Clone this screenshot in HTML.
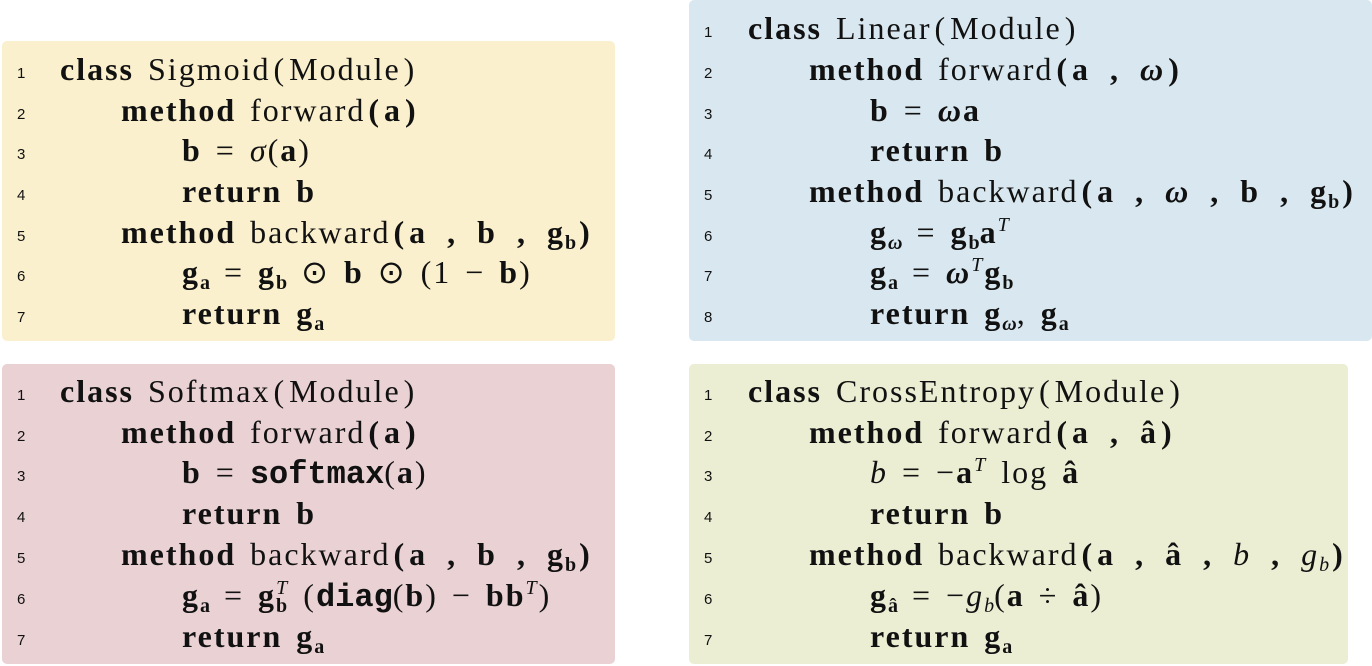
<!DOCTYPE html><html><head><style>
body{margin:0;width:1372px;height:666px;background:#fff;position:relative;overflow:hidden;font-family:"Liberation Serif",serif;font-size:32px;color:#111}
.b{position:absolute;border-radius:5px}
.l{position:absolute;white-space:nowrap;line-height:34px;letter-spacing:2px;word-spacing:4px}
.n{position:absolute;font-family:"Liberation Sans",sans-serif;font-size:15px;line-height:34px}
b{font-weight:bold}
.m{font-weight:bold;word-spacing:10px}
.p{margin:0 3px}
.tt{font-family:"Liberation Mono",monospace;font-weight:bold;letter-spacing:0}
sub{font-size:20px;vertical-align:-6px;font-weight:bold;line-height:0;letter-spacing:0}
sup{font-size:20px;vertical-align:12px;font-style:italic;line-height:0}
i{font-style:italic}
</style></head><body>
<div class="b" style="left:2px;top:41px;width:613px;height:300px;background:#faf0cd"></div>
<div class="b" style="left:689px;top:0;width:683px;height:341px;background:#d9e8f0"></div>
<div class="b" style="left:2px;top:364px;width:613px;height:300px;background:#ead1d4"></div>
<div class="b" style="left:689px;top:364px;width:659px;height:300px;background:#ebeed3"></div>

<!-- Sigmoid -->
<div class="n" style="left:17px;top:57px">1</div><div class="l" style="left:60px;top:52px"><b>class</b> Sigmoid<span class="p">(</span>Module<span class="p">)</span></div>
<div class="n" style="left:17px;top:98px">2</div><div class="l" style="left:121px;top:93px"><b>method</b> forward<span class="m"><span class="p">(</span>a<span class="p">)</span></span></div>
<div class="n" style="left:17px;top:138px">3</div><div class="l" style="left:182px;top:133px"><b>b</b> = <i>σ</i>(<b>a</b>)</div>
<div class="n" style="left:17px;top:179px">4</div><div class="l" style="left:182px;top:174px"><b>return b</b></div>
<div class="n" style="left:17px;top:220px">5</div><div class="l" style="left:121px;top:215px"><b>method</b> backward<span class="m"><span class="p">(</span>a , b , g<sub>b</sub><span class="p">)</span></span></div>
<div class="n" style="left:17px;top:260px">6</div><div class="l" style="left:182px;top:255px"><b>g<sub>a</sub></b> = <b>g<sub>b</sub></b> ⊙ <b>b</b> ⊙ (1 − <b>b</b>)</div>
<div class="n" style="left:17px;top:301px">7</div><div class="l" style="left:182px;top:296px"><b>return g<sub>a</sub></b></div>

<!-- Linear -->
<div class="n" style="left:704px;top:16px">1</div><div class="l" style="left:748px;top:11px"><b>class</b> Linear<span class="p">(</span>Module<span class="p">)</span></div>
<div class="n" style="left:704px;top:57px">2</div><div class="l" style="left:809px;top:52px"><b>method</b> forward<span class="m"><span class="p">(</span>a , <i>ω</i><span class="p">)</span></span></div>
<div class="n" style="left:704px;top:98px">3</div><div class="l" style="left:870px;top:93px"><b>b</b> = <b><i>ω</i>a</b></div>
<div class="n" style="left:704px;top:138px">4</div><div class="l" style="left:870px;top:133px"><b>return b</b></div>
<div class="n" style="left:704px;top:179px">5</div><div class="l" style="left:809px;top:174px"><b>method</b> backward<span class="m"><span class="p">(</span>a , <i>ω</i> , b , g<sub>b</sub><span class="p">)</span></span></div>
<div class="n" style="left:704px;top:220px">6</div><div class="l" style="left:870px;top:215px"><b>g<sub><i>ω</i></sub></b> = <b>g<sub>b</sub>a</b><sup>T</sup></div>
<div class="n" style="left:704px;top:260px">7</div><div class="l" style="left:870px;top:255px"><b>g<sub>a</sub></b> = <b><i>ω</i></b><sup>T</sup><b>g<sub>b</sub></b></div>
<div class="n" style="left:704px;top:301px">8</div><div class="l" style="left:870px;top:296px"><b>return g<sub><i>ω</i></sub></b>, <b>g<sub>a</sub></b></div>

<!-- Softmax -->
<div class="n" style="left:17px;top:379px">1</div><div class="l" style="left:60px;top:374px"><b>class</b> Softmax<span class="p">(</span>Module<span class="p">)</span></div>
<div class="n" style="left:17px;top:420px">2</div><div class="l" style="left:121px;top:415px"><b>method</b> forward<span class="m"><span class="p">(</span>a<span class="p">)</span></span></div>
<div class="n" style="left:17px;top:460px">3</div><div class="l" style="left:182px;top:455px"><b>b</b> = <span class="tt">softmax</span>(<b>a</b>)</div>
<div class="n" style="left:17px;top:501px">4</div><div class="l" style="left:182px;top:496px"><b>return b</b></div>
<div class="n" style="left:17px;top:542px">5</div><div class="l" style="left:121px;top:537px"><b>method</b> backward<span class="m"><span class="p">(</span>a , b , g<sub>b</sub><span class="p">)</span></span></div>
<div class="n" style="left:17px;top:583px">6</div><div class="l" style="left:182px;top:578px"><b>g<sub>a</sub></b> = <b>g<sub>b</sub></b><sup style="margin-left:-11px">T</sup> (<span class="tt">diag</span>(<b>b</b>) − <b>bb</b><sup>T</sup>)</div>
<div class="n" style="left:17px;top:624px">7</div><div class="l" style="left:182px;top:619px"><b>return g<sub>a</sub></b></div>

<!-- CrossEntropy -->
<div class="n" style="left:704px;top:379px">1</div><div class="l" style="left:748px;top:374px"><b>class</b> CrossEntropy<span class="p">(</span>Module<span class="p">)</span></div>
<div class="n" style="left:704px;top:420px">2</div><div class="l" style="left:809px;top:415px"><b>method</b> forward<span class="m"><span class="p">(</span>a , â<span class="p">)</span></span></div>
<div class="n" style="left:704px;top:460px">3</div><div class="l" style="left:870px;top:455px"><i>b</i> = −<b>a</b><sup>T</sup> log <b>â</b></div>
<div class="n" style="left:704px;top:501px">4</div><div class="l" style="left:870px;top:496px"><b>return b</b></div>
<div class="n" style="left:704px;top:542px">5</div><div class="l" style="left:809px;top:537px"><b>method</b> backward<span class="m"><span class="p">(</span>a , â , <i style="font-weight:normal">b</i> , <i style="font-weight:normal">g<sub style="font-weight:normal">b</sub></i><span class="p">)</span></span></div>
<div class="n" style="left:704px;top:583px">6</div><div class="l" style="left:870px;top:578px"><b>g<sub>â</sub></b> = −<i>g<sub style="font-weight:normal">b</sub></i>(<b>a</b> ÷ <b>â</b>)</div>
<div class="n" style="left:704px;top:624px">7</div><div class="l" style="left:870px;top:619px"><b>return g<sub>a</sub></b></div>
</body></html>
